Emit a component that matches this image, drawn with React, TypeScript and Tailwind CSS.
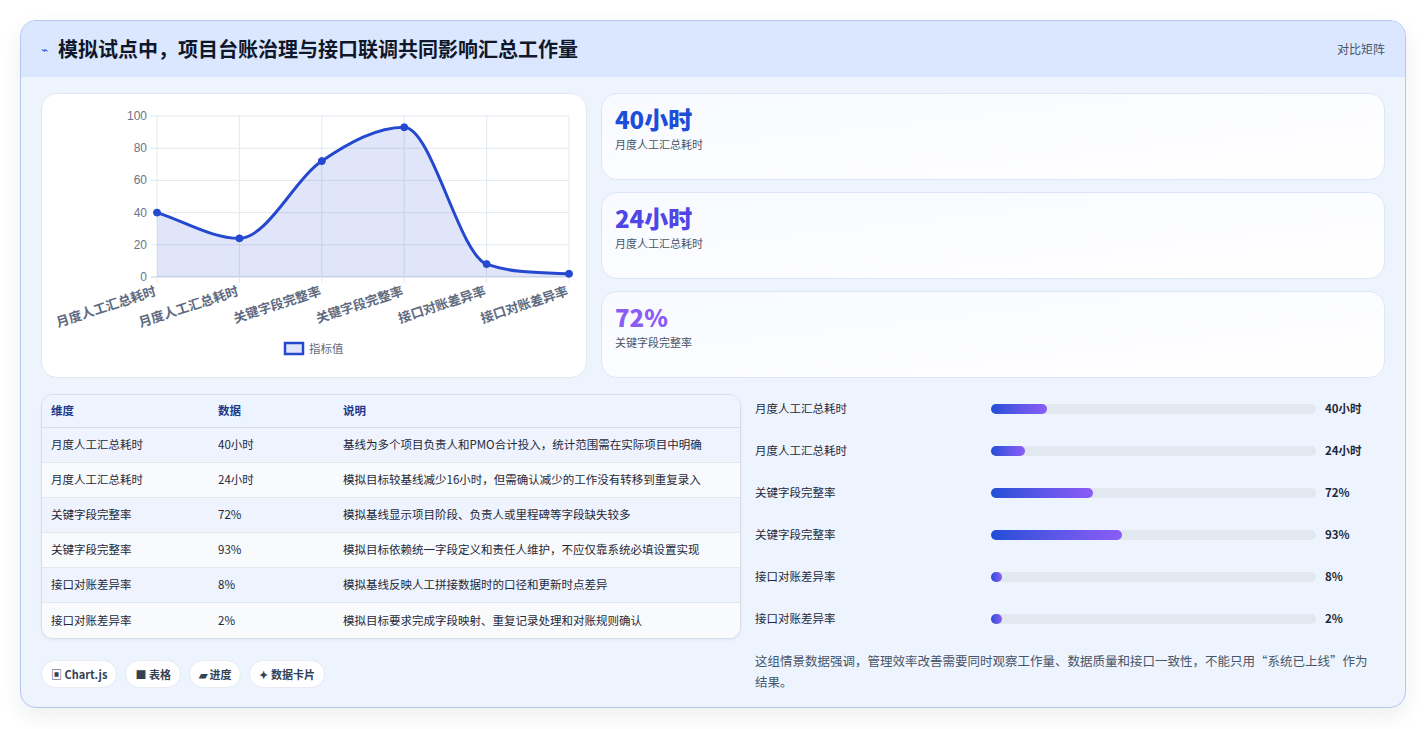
import React from "react";

const vals = [40, 24, 72, 93, 8, 2];
const labels = ["月度人工汇总耗时", "月度人工汇总耗时", "关键字段完整率", "关键字段完整率", "接口对账差异率", "接口对账差异率"];
const X0 = 115, X1 = 527, Y0 = 22, Y1 = 183;
const pts = vals.map((v, i) => [X0 + (i * (X1 - X0)) / 5, Y1 - (v / 100) * (Y1 - Y0)]);

function curve() {
  const n = pts.length;
  const dx = (X1 - X0) / 5;
  const del: number[] = [];
  for (let i = 0; i < n - 1; i++) del.push((pts[i + 1][1] - pts[i][1]) / dx);
  const m: number[] = [];
  m[0] = del[0];
  m[n - 1] = del[n - 2];
  for (let i = 1; i < n - 1; i++) m[i] = del[i - 1] * del[i] <= 0 ? 0 : (del[i - 1] + del[i]) / 2;
  for (let i = 0; i < n - 1; i++) {
    if (del[i] === 0) { m[i] = 0; m[i + 1] = 0; continue; }
    const a = m[i] / del[i], b = m[i + 1] / del[i], s = a * a + b * b;
    if (s > 9) { const t = 3 / Math.sqrt(s); m[i] = t * a * del[i]; m[i + 1] = t * b * del[i]; }
  }
  let d = `M${pts[0][0]},${pts[0][1]}`;
  for (let i = 0; i < n - 1; i++) {
    const h = dx / 3;
    d += ` C${pts[i][0] + h},${pts[i][1] + m[i] * h} ${pts[i + 1][0] - h},${pts[i + 1][1] - m[i + 1] * h} ${pts[i + 1][0]},${pts[i + 1][1]}`;
  }
  return d;
}

const rows = [
  ["月度人工汇总耗时", "40小时", "基线为多个项目负责人和PMO合计投入，统计范围需在实际项目中明确"],
  ["月度人工汇总耗时", "24小时", "模拟目标较基线减少16小时，但需确认减少的工作没有转移到重复录入"],
  ["关键字段完整率", "72%", "模拟基线显示项目阶段、负责人或里程碑等字段缺失较多"],
  ["关键字段完整率", "93%", "模拟目标依赖统一字段定义和责任人维护，不应仅靠系统必填设置实现"],
  ["接口对账差异率", "8%", "模拟基线反映人工拼接数据时的口径和更新时点差异"],
  ["接口对账差异率", "2%", "模拟目标要求完成字段映射、重复记录处理和对账规则确认"],
];
const bars = [56, 34, 102, 131, 11, 11];

export default function App() {
  const d = curve();
  return (
    <div className="w-[1426px] h-[729px] bg-white p-5 text-[#1e293b]" style={{ fontFamily: '"Noto Sans CJK SC", "Noto Sans", sans-serif' }}>
      <div className="h-[688px] rounded-2xl border border-[#b7c6ee] bg-[#eef4fe] overflow-hidden shadow-[0_8px_20px_rgba(30,41,59,0.08)]">
        <div className="h-[56px] bg-[#dbe7fe] flex items-center justify-between px-5">
          <div className="flex items-center gap-[10px]">
            <span className="text-[#2563eb] text-[12px]">⌁</span>
            <span className="text-[20px] font-bold text-[#0f172a]">模拟试点中，项目台账治理与接口联调共同影响汇总工作量</span>
          </div>
          <span className="text-[12px] text-[#475569]">对比矩阵</span>
        </div>
        <div className="px-5 pt-4">
          <div className="flex gap-[14px] h-[285px]">
            <div className="w-[546px] bg-white rounded-2xl border border-[#e2e8f0] relative">
              <svg width="546" height="285" className="absolute left-0 top-0">
                {[0, 20, 40, 60, 80, 100].map((v) => {
                  const y = Y1 - (v / 100) * (Y1 - Y0);
                  return (
                    <g key={v}>
                      <line x1={X0 - 6} x2={X1} y1={y} y2={y} stroke={v === 0 ? "#c7d0e0" : "#e2e8f0"} />
                      <text x={X0 - 10} y={y + 4} textAnchor="end" fontSize="12" fill="#6b7588" fontFamily="Liberation Sans, sans-serif">{v}</text>
                    </g>
                  );
                })}
                {pts.map((p, i) => (
                  <line key={i} x1={p[0]} x2={p[0]} y1={Y0} y2={Y1 + 6} stroke="#e2e8f0" />
                ))}
                <path d={`${d} L${X1},${Y1} L${X0},${Y1} Z`} fill="rgba(37,74,210,0.14)" />
                <path d={d} fill="none" stroke="#2449cf" strokeWidth="3" />
                {pts.map((p, i) => (
                  <circle key={i} cx={p[0]} cy={p[1]} r="3.5" fill="#2449cf" stroke="#2449cf" strokeWidth="1" />
                ))}
                {pts.map((p, i) => (
                  <text key={i} x={p[0]} y={Y1 + 18} textAnchor="end" fontSize="13" fontWeight="600" fill="#5f6b80" transform={`rotate(-18 ${p[0]} ${Y1 + 18})`}>{labels[i]}</text>
                ))}
                <rect x="243" y="249" width="18" height="11" fill="rgba(37,74,210,0.14)" stroke="#2449cf" strokeWidth="2.5" />
                <text x="267" y="259" fontSize="11.5" fill="#5f6b80">指标值</text>
              </svg>
            </div>
            <div className="flex-1 flex flex-col gap-3">
              {[
                ["40小时", "月度人工汇总耗时", "text-[#1d4ed8]"],
                ["24小时", "月度人工汇总耗时", "text-[#4f46e5]"],
                ["72%", "关键字段完整率", "text-[#8b5cf6]"],
              ].map(([v, l, c], i) => (
                <div key={i} className="h-[87px] rounded-2xl border border-[#dde6f7] bg-gradient-to-br from-[#f8faff] to-white px-[13px] pt-[9px]">
                  <div className={`text-[24px] font-extrabold leading-[32px] ${c}`}>{v}</div>
                  <div className="text-[11px] text-[#475569] mt-[1px]">{l}</div>
                </div>
              ))}
            </div>
          </div>
          <div className="flex gap-[14px] mt-4">
            <div className="w-[700px]">
              <div className="rounded-xl border border-[#d7deea] overflow-hidden bg-white text-[11.5px] shadow-[0_1px_3px_rgba(0,0,0,0.06)]">
                <div className="flex h-[33px] items-center bg-[#eef4ff] font-bold text-[#1e3a8a] border-b border-[#d7deea]">
                  <div className="w-[176px] pl-[9px]">维度</div>
                  <div className="w-[125px]">数据</div>
                  <div className="flex-1">说明</div>
                </div>
                {rows.map((r, i) => (
                  <div key={i} className={`flex h-[35px] items-center text-[#1e293b] ${i % 2 === 0 ? "bg-[#eef3fd]" : "bg-[#f8fafc]"} ${i < 5 ? "border-b border-[#e2e8f0]" : ""}`}>
                    <div className="w-[176px] pl-[9px]">{r[0]}</div>
                    <div className="w-[125px]">{r[1]}</div>
                    <div className="flex-1 whitespace-nowrap overflow-hidden">{r[2]}</div>
                  </div>
                ))}
              </div>
              <div className="flex gap-2 mt-[21px] text-[11px] font-semibold text-[#334155]">
                {["▣ Chart.js", "■ 表格", "▰ 进度", "✦ 数据卡片"].map((c) => (
                  <span key={c} className="h-[28px] px-[9px] flex items-center rounded-full bg-white border border-[#e5eaf3]">{c}</span>
                ))}
              </div>
            </div>
            <div className="flex-1 -mt-[6px]">
              {rows.map((r, i) => (
                <div key={i} className="h-[42px] flex items-center text-[11.5px]">
                  <div className="w-[236px] text-[#1e293b]">{r[0]}</div>
                  <div className="w-[325px] h-[10px] rounded-full bg-[#e2e8f0]">
                    <div className="h-full rounded-full bg-gradient-to-r from-[#1d4ed8] to-[#8b5cf6]" style={{ width: bars[i] }} />
                  </div>
                  <div className="ml-[9px] font-bold text-[#1e293b]">{r[1]}</div>
                </div>
              ))}
              <p className="mt-[10px] pr-2 text-[12.5px] leading-[21px] text-[#475569]">这组情景数据强调，管理效率改善需要同时观察工作量、数据质量和接口一致性，不能只用“系统已上线”作为结果。</p>
            </div>
          </div>
        </div>
      </div>
    </div>
  );
}
